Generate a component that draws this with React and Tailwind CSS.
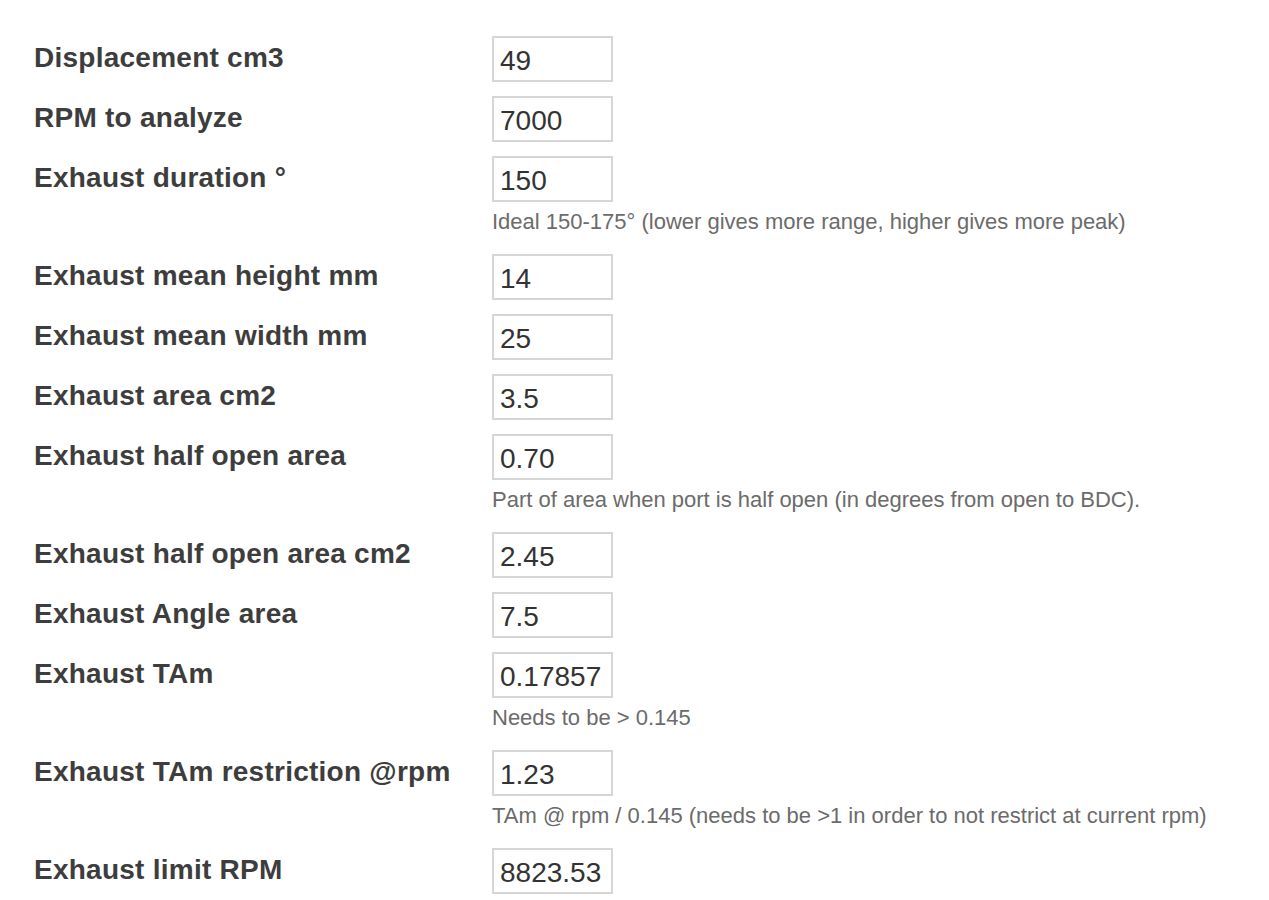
const rows = [
  { label: "Displacement cm3", value: "49" },
  { label: "RPM to analyze", value: "7000" },
  {
    label: "Exhaust duration °",
    value: "150",
    help: "Ideal 150-175° (lower gives more range, higher gives more peak)",
  },
  { label: "Exhaust mean height mm", value: "14" },
  { label: "Exhaust mean width mm", value: "25" },
  { label: "Exhaust area cm2", value: "3.5" },
  {
    label: "Exhaust half open area",
    value: "0.70",
    help: "Part of area when port is half open (in degrees from open to BDC).",
  },
  { label: "Exhaust half open area cm2", value: "2.45" },
  { label: "Exhaust Angle area", value: "7.5" },
  { label: "Exhaust TAm", value: "0.17857", help: "Needs to be > 0.145" },
  {
    label: "Exhaust TAm restriction @rpm",
    value: "1.23",
    help: "TAm @ rpm / 0.145 (needs to be >1 in order to not restrict at current rpm)",
  },
  { label: "Exhaust limit RPM", value: "8823.53" },
];

export default function App() {
  return (
    <div
      className="w-full min-h-screen bg-white pl-[34px] pt-[36px] flex flex-col gap-[14px]"
      style={{ fontFamily: '"Liberation Sans", Arial, sans-serif' }}
    >
      {rows.map((row) => (
        <div key={row.label} className="flex items-start">
          {/* label column */}
          <div className="w-[458px] shrink-0 pt-[6px] text-[28px] font-bold tracking-[0.25px] text-[#3d3d3d] leading-[32px]">
            {row.label}
          </div>

          {/* input + optional help */}
          <div className="flex flex-col">
            <input
              type="text"
              readOnly
              value={row.value}
              className="w-[121px] h-[46px] border-2 border-[#d6d6d6] bg-white pl-[6px] pr-[4px] pt-[4px] pb-0 text-[28px] text-[#333] outline-none"
              style={{ fontFamily: '"Liberation Sans", Arial, sans-serif' }}
            />
            {row.help && (
              <div className="mt-[2px] h-[36px] leading-[36px] text-[22px] text-[#6b6b6b] whitespace-nowrap">
                {row.help}
              </div>
            )}
          </div>
        </div>
      ))}
    </div>
  );
}
